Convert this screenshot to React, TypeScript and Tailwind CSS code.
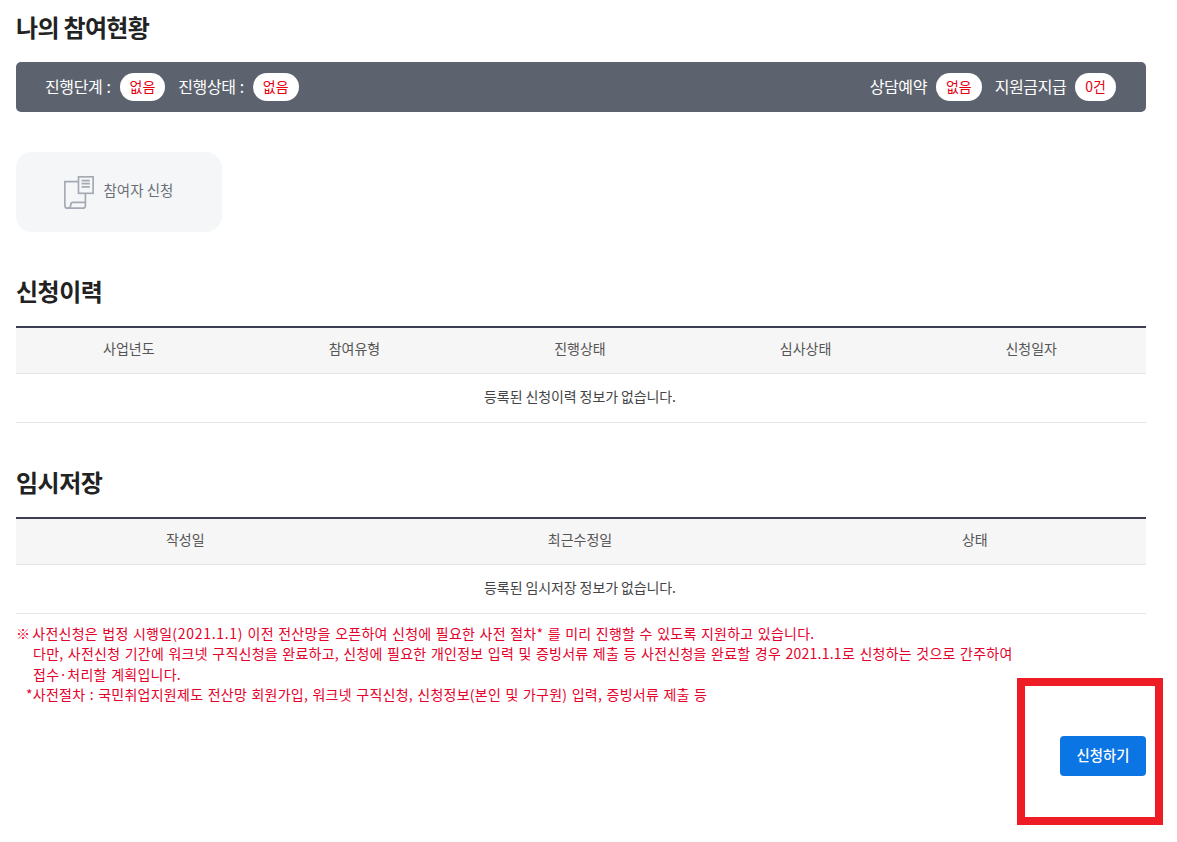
import React from 'react';

const font = { fontFamily: '"Noto Sans CJK KR", "Noto Sans", sans-serif' };

const Pill: React.FC<{ children: React.ReactNode }> = ({ children }) => (
  <span className="inline-flex h-[28px] items-center justify-center rounded-full bg-white px-[10px] pb-[2px] text-[14px] tracking-normal text-[#e60012]">
    {children}
  </span>
);

const ScrollIcon = () => (
  <svg width="30" height="33" viewBox="0 0 29 32" fill="none" stroke="#a5a9b3" strokeWidth="1.6" aria-hidden="true">
    <path d="M14 5.500H.800v23c0 1.800 1.200 2.700 2.700 2.700h14.500c1.600 0 2.700-1 2.700-2.700v-2.900H8.500c-1.500 0-2 1-2 2.400s-1 3.200-3 3.200" />
    <rect x="14" y=".8" width="14.200" height="16" fill="#f4f6f8" />
    <path d="M17 4.500h8M17 7.500h8M17 10.500h8" strokeWidth="1.700" />
    <path d="M20.700 17v8.500" />
  </svg>
);

const HistoryTable: React.FC<{ columns: string[]; empty: string; gridClass: string }> = ({ columns, empty, gridClass }) => (
  <div className="border-t-2 border-[#3e3e52]">
    <div className={`grid h-[46px] items-center border-b border-[#e5e5e5] bg-[#f6f6f6] pr-[2px] pb-1 text-[14px] text-[#555] ${gridClass}`}>
      {columns.map((col) => (
        <div key={col} className="text-center">{col}</div>
      ))}
    </div>
    <div className="flex h-[49px] items-center justify-center border-b border-[#e5e5e5] pr-[2px] pb-1 text-[14px] tracking-[-0.1px] text-[#444]">
      {empty}
    </div>
  </div>
);

export default function App() {
  return (
    <div className="relative h-[842px] overflow-hidden bg-white" style={font}>
      <div className="ml-4 w-[1130px]">
        <h2 className="pt-[10px] pb-[1px] text-[24px] leading-[34px] font-bold tracking-[-0.7px] text-[#222]">나의 참여현황</h2>

        <div className="mt-[17px] flex h-[50px] items-center justify-between rounded-[5px] bg-[#5c636e] pr-[30px] pl-[29px] text-[16px] tracking-[-0.4px] text-white [word-spacing:1px]">
          <div className="flex items-center">
            <span className="mr-[9px] pb-[2px]">진행단계 :</span>
            <Pill>없음</Pill>
            <span className="mr-[9px] ml-[13px] pb-[2px]">진행상태 :</span>
            <Pill>없음</Pill>
          </div>
          <div className="flex items-center">
            <span className="mr-[9px] pb-[2px]">상담예약</span>
            <Pill>없음</Pill>
            <span className="mr-[9px] ml-[13px] pb-[2px]">지원금지급</span>
            <Pill>0건</Pill>
          </div>
        </div>

        <div className="mt-10 flex h-20 w-[206px] items-center justify-center gap-[10px] rounded-[16px] bg-[#f4f6f8] pr-[1px] text-[14.5px] text-[#6b6f76]">
          <ScrollIcon />
          <span className="pb-1">참여자 신청</span>
        </div>

        <h2 className="mt-[42px] pb-[1px] text-[24px] leading-[34px] font-bold tracking-[-0.5px] text-[#222]">신청이력</h2>
        <div className="mt-[17px]">
          <HistoryTable
            columns={['사업년도', '참여유형', '진행상태', '심사상태', '신청일자']}
            empty="등록된 신청이력 정보가 없습니다."
            gridClass="grid-cols-5"
          />
        </div>

        <h2 className="mt-[42px] pb-[1px] text-[24px] leading-[34px] font-bold tracking-[-0.5px] text-[#222]">임시저장</h2>
        <div className="mt-[17px]">
          <HistoryTable
            columns={['작성일', '최근수정일', '상태']}
            empty="등록된 임시저장 정보가 없습니다."
            gridClass="grid-cols-[30%_40%_30%]"
          />
        </div>

        <div className="mt-[9px] text-[14px] leading-[20.4px] tracking-[0.25px] text-[#e4002b] [word-spacing:1px]">
          <p>
            <span className="mr-[2px]">※</span>사전신청은 법정 시행일<span className="tracking-[0.7px]">(2021.1.1)</span> 이전 전산망을 오픈하여 신청에 필요한 사전 절차* 를 미리 진행할 수 있도록 지원하고 있습니다.
          </p>
          <p className="pl-[17px]">다만, 사전신청 기간에 워크넷 구직신청을 완료하고, 신청에 필요한 개인정보 입력 및 증빙서류 제출 등 사전신청을 완료할 경우 2021.1.1로 신청하는 것으로 간주하여</p>
          <p className="pl-[17px]">접수·처리할 계획입니다.</p>
          <p className="pl-[10px]">*사전절차 : 국민취업지원제도 전산망 회원가입, 워크넷 구직신청, 신청정보(본인 및 가구원) 입력, 증빙서류 제출 등</p>
        </div>

        <div className="mt-[31px] flex justify-end">
          <button className="h-10 w-[86px] rounded-[4px] bg-[#0b75e3] pb-[1px] text-[14.4px] font-medium text-white">신청하기</button>
        </div>
      </div>

      {/* annotation drawn over the page */}
      <div className="absolute top-[678px] left-[1017px] h-[147px] w-[146px] border-8 border-[#ee1c25]" />
    </div>
  );
}
